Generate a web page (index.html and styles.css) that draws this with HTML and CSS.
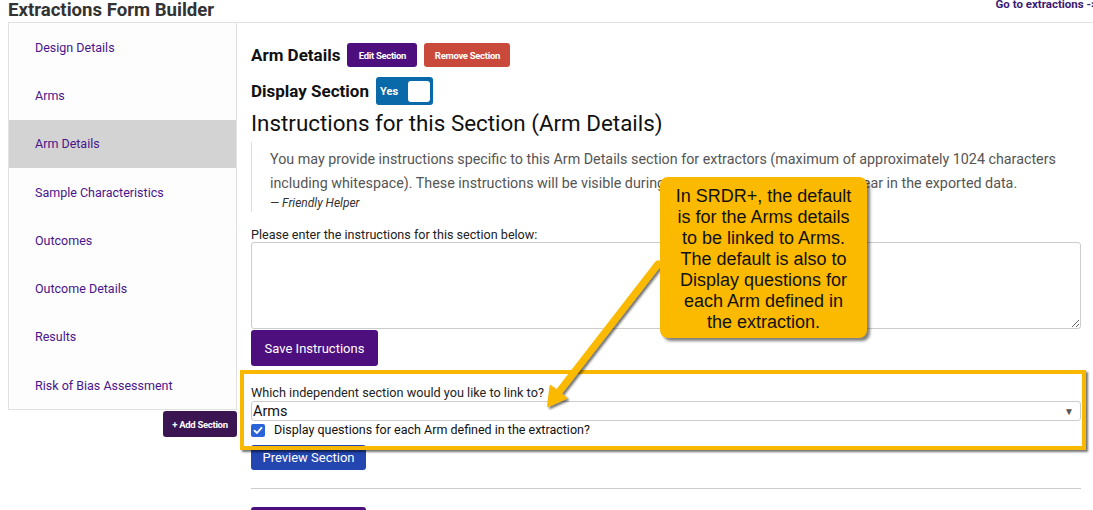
FILE: index.html
```html
<!DOCTYPE html>
<html lang="en">
<head>
<meta charset="utf-8">
<title>Extractions Form Builder</title>
<link rel="stylesheet" href="styles.css">
</head>
<body>
<div class="page">
  <header class="topbar">
    <h1 class="title">Extractions Form Builder</h1>
    <a class="goto" href="#">Go to extractions -&gt;</a>
  </header>
  <div class="layout">
    <aside class="side">
      <nav class="side-nav">
        <a class="side-item" href="#">Design Details</a>
        <a class="side-item" href="#">Arms</a>
        <a class="side-item active" href="#">Arm Details</a>
        <a class="side-item" href="#">Sample Characteristics</a>
        <a class="side-item" href="#">Outcomes</a>
        <a class="side-item" href="#">Outcome Details</a>
        <a class="side-item" href="#">Results</a>
        <a class="side-item" href="#">Risk of Bias Assessment</a>
      </nav>
      <button class="add-btn" type="button">+ Add Section</button>
    </aside>
    <main class="main">
      <div class="sec-head">
        <h2 class="sec-title">Arm Details</h2>
        <button class="mini-btn edit" type="button">Edit Section</button>
        <button class="mini-btn remove" type="button">Remove Section</button>
      </div>
      <div class="display-row">
        <h2 class="sec-title">Display Section</h2>
        <span class="toggle"><span class="toggle-label">Yes</span><span class="knob"></span></span>
      </div>
      <h3 class="instr-title">Instructions for this Section (Arm Details)</h3>
      <blockquote class="quote">
        <p class="quote-text">You may provide instructions specific to this Arm Details section for extractors (maximum of approximately 1024 characters including whitespace). These instructions will be visible during extraction but they will not appear in the exported data.</p>
        <footer class="quote-foot">— Friendly Helper</footer>
      </blockquote>
      <label class="field-label" for="instr">Please enter the instructions for this section below:</label>
      <textarea class="instr-box" id="instr"></textarea>
      <button class="btn purple save" type="button">Save Instructions</button>
      <div class="link-group">
        <div class="link-label">Which independent section would you like to link to?</div>
        <div class="select"><span>Arms</span><span class="caret">▼</span></div>
        <div class="check-row">
          <span class="checkbox"><svg width="10" height="9" viewBox="0 0 10 9"><path d="M1.5 4.8 L4 7 L8.5 1.8" fill="none" stroke="#fff" stroke-width="1.8" stroke-linecap="round" stroke-linejoin="round"/></svg></span>
          <span class="check-label">Display questions for each Arm defined in the extraction?</span>
        </div>
      </div>
      <button class="btn blue preview" type="button">Preview Section</button>
      <hr class="divider">
      <button class="btn purple next" type="button">Next</button>
    </main>
  </div>

  <div class="highlight"></div>
  <svg class="arrow" width="140" height="160" viewBox="530 255 140 160">
    <defs>
      <filter id="sh" x="-20%" y="-20%" width="140%" height="140%">
        <feDropShadow dx="2" dy="2" stdDeviation="1" flood-color="#000" flood-opacity="0.55"/>
      </filter>
    </defs>
    <g filter="url(#sh)">
      <line x1="658" y1="264" x2="558" y2="393" stroke="#fbb900" stroke-width="7" stroke-linecap="round"/>
      <polygon points="548,406 550.5,386 566,398" fill="#fbb900" stroke="#fbb900" stroke-width="2" stroke-linejoin="round"/>
    </g>
  </svg>
  <div class="callout">In SRDR+, the default<br>is for the Arms details<br>to be linked to Arms.<br>The default is also to<br>Display questions for<br>each Arm defined in<br>the extraction.</div>
</div>
</body>
</html>
```

FILE: styles.css
```css
* { box-sizing: border-box; }

html, body {
  margin: 0;
  padding: 0;
  background: #fff;
  overflow: hidden;
}

body {
  font-family: "Roboto", "Liberation Sans", sans-serif;
  color: #222;
}

.page {
  position: relative;
  padding-left: 8px;
  width: 1093px;
  height: 510px;
  overflow: hidden;
}

.topbar {
  display: flex;
  justify-content: space-between;
  align-items: flex-start;
  height: 22px;
}

.title {
  margin: -1px 0 0 0;
  font-size: 18.6px;
  line-height: 22px;
  font-weight: 700;
  color: #333;
}

.goto {
  margin-top: -3px;
  margin-right: -4px;
  font-size: 11.5px;
  line-height: 14px;
  font-weight: 700;
  color: #3b1a73;
  text-decoration: none;
  white-space: nowrap;
}

.layout {
  display: flex;
  border-top: 1px solid #e2e2e2;
}

.side {
  width: 229px;
  flex: none;
  display: flex;
  flex-direction: column;
  align-items: flex-end;
}

.side-nav {
  width: 229px;
  display: flex;
  flex-direction: column;
  background: #fdfdfd;
  border: 1px solid #e2e2e2;
  border-top: none;
}

.side-item {
  height: 48.3px;
  display: flex;
  align-items: center;
  padding-left: 26px;
  font-size: 12.5px;
  color: #4a148c;
  text-decoration: none;
}

.side-item.active {
  background: #d3d3d3;
}

.add-btn {
  margin-top: 1px;
  width: 74px;
  height: 26px;
  border: none;
  border-radius: 3px;
  background: #3a1552;
  color: #fff;
  font-family: "Roboto", sans-serif;
  font-size: 9.5px;
  font-weight: 700;
  letter-spacing: -0.3px;
  padding: 0;
}

.main {
  flex: 1;
  padding: 20px 12px 0 14px;
  display: flex;
  flex-direction: column;
  align-items: flex-start;
}

.sec-head, .display-row {
  display: flex;
  align-items: center;
  gap: 7px;
}

.sec-head { height: 24px; }

.display-row {
  height: 28px;
  margin-top: 10px;
}

.sec-title {
  margin: 0;
  font-size: 17px;
  line-height: 24px;
  font-weight: 700;
  color: #111;
}

.mini-btn {
  height: 24px;
  border: none;
  border-radius: 3px;
  color: #fff;
  font-family: "Roboto", sans-serif;
  font-size: 9.5px;
  font-weight: 700;
  letter-spacing: -0.3px;
  padding: 0;
}

.mini-btn.edit { width: 70px; background: #4d0f7d; }
.mini-btn.remove { width: 86px; background: #c94a3a; }

.toggle {
  width: 57px;
  height: 28px;
  border-radius: 3px;
  background: #0a69a8;
  display: flex;
  align-items: center;
  justify-content: space-between;
  padding: 0 3px 0 4px;
}

.toggle-label {
  color: #fff;
  font-size: 11px;
  font-weight: 700;
}

.knob {
  width: 22px;
  height: 21px;
  background: #fff;
  border-radius: 3px;
}

.instr-title {
  margin: 4px 0 0 0;
  font-size: 22.4px;
  line-height: 28px;
  font-weight: 400;
  color: #111;
}

.quote {
  margin: 5px 0 0 0;
  padding: 6px 0 1px 18px;
  border-left: 1px solid #ddd;
  width: 830px;
}

.quote-text {
  margin: 0;
  font-size: 14.3px;
  line-height: 23.5px;
  color: #555;
}

.quote-foot {
  font-size: 12px;
  line-height: 16px;
  font-style: italic;
  color: #333;
}

.field-label {
  margin-top: 16px;
  font-size: 12.6px;
  line-height: 14px;
  color: #222;
}

.instr-box {
  display: block;
  width: 830px;
  height: 87px;
  border: 1px solid #ccc;
  border-radius: 3px;
  resize: vertical;
  font-family: inherit;
}

.btn {
  border: none;
  border-radius: 3px;
  color: #fff;
  font-family: "Roboto", sans-serif;
  font-size: 13px;
  padding: 0;
}

.purple { background: #4d0f7d; }
.blue { background: #2446b0; }

.save {
  margin-top: 1px;
  width: 127px;
  height: 36px;
}

.link-group {
  margin-top: 19px;
  width: 830px;
}

.link-label {
  font-size: 12.7px;
  line-height: 16px;
  color: #222;
}

.select {
  height: 20px;
  border: 1px solid #ccc;
  border-radius: 3px;
  display: flex;
  align-items: center;
  justify-content: space-between;
  padding: 0 6px 0 1px;
  font-size: 14.5px;
  color: #111;
}

.caret {
  font-size: 10px;
  color: #555;
}

.check-row {
  height: 16px;
  display: flex;
  align-items: center;
  gap: 9px;
  margin-top: 1px;
}

.checkbox {
  width: 14px;
  height: 13px;
  border-radius: 2px;
  background: #2b63d9;
  display: flex;
  align-items: center;
  justify-content: center;
}

.check-label {
  font-size: 12.5px;
  line-height: 16px;
  color: #111;
}

.preview {
  margin-top: 7px;
  width: 115px;
  height: 25px;
}

.divider {
  margin: 18px 0 0 0;
  width: 830px;
  border: none;
  border-top: 1px solid #ccc;
  height: 0;
}

.next {
  margin-top: 18px;
  width: 115px;
  height: 36px;
}

.highlight {
  position: absolute;
  left: 240px;
  top: 370px;
  width: 846px;
  height: 80px;
  border: 4px solid #f9b800;
  box-shadow: 2px 2px 2px rgba(0, 0, 0, 0.55);
  pointer-events: none;
}

.arrow {
  position: absolute;
  left: 530px;
  top: 255px;
  pointer-events: none;
}

.callout {
  position: absolute;
  left: 660px;
  top: 177px;
  width: 207px;
  height: 161px;
  padding-top: 9px;
  background: #fbb900;
  border-radius: 8px;
  box-shadow: 3px 3px 3px rgba(0, 0, 0, 0.5);
  font-family: "Liberation Sans", Arial, sans-serif;
  font-size: 18px;
  line-height: 21px;
  text-align: center;
  color: #111;
}
```
